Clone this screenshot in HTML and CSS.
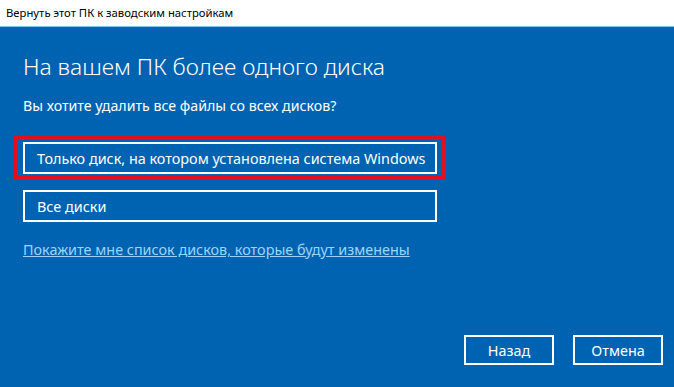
FILE: index.html
```html
<!DOCTYPE html>
<html lang="ru">

<head>
    <meta charset="UTF-8">
    <meta name="viewport" content="width=device-width, initial-scale=1.0">
    <title>Вернуть этот ПК к заводским настройкам</title>
    <link rel="stylesheet" href="styles.css">
</head>

<body>

    <div class="window">
        <!-- Заголовок окна -->
        <div class="titlebar">Вернуть этот ПК к заводским настройкам</div>

        <div class="content">
            <h1>На вашем ПК более одного диска</h1>
            <p class="question">Вы хотите удалить все файлы со всех дисков?</p>

            <!-- Варианты -->
            <div class="options">
                <div class="highlight">
                    <button class="option">Только диск, на котором установлена система Windows</button>
                </div>
                <button class="option">Все диски</button>
            </div>

            <a class="link" href="#">Покажите мне список дисков, которые будут изменены</a>

            <!-- Кнопки внизу -->
            <div class="footer">
                <button class="action">Назад</button>
                <button class="action">Отмена</button>
            </div>
        </div>
    </div>

</body>

</html>
```

FILE: styles.css
```css
body {
    margin: 0;
    padding: 0;
    font-family: "Noto Sans", "Open Sans", sans-serif;
    background-color: #0063b1;
}

.window {
    display: flex;
    flex-direction: column;
    width: 674px;
    height: 387px;
    overflow: hidden;
}

.titlebar {
    height: 26px;
    line-height: 26px;
    padding-left: 6px;
    background-color: #ffffff;
    color: #000000;
    font-size: 11.3px;
    border-bottom: 1px solid #7fc4f0;
}

.content {
    flex: 1;
    display: flex;
    flex-direction: column;
    padding: 0 11px 0 23px;
    color: #ffffff;
}

h1 {
    margin: 25px 0 0 0;
    font-size: 22.8px;
    font-weight: 300;
    line-height: 30px;
}

.question {
    margin: 14px 0 0 0;
    font-size: 14.2px;
    line-height: 20px;
}

.options {
    display: flex;
    flex-direction: column;
    gap: 16px;
    margin-top: 26px;
    width: 414px;
}

.highlight {
    margin: -6px -9px;
    padding: 2px 5px;
    border: 4px solid #e2101f;
}

.option {
    display: block;
    width: 414px;
    height: 32px;
    padding: 0 12px;
    background-color: transparent;
    border: 2px solid #ffffff;
    color: #ffffff;
    font-family: inherit;
    font-size: 14.4px;
    text-align: left;
    white-space: nowrap;
    cursor: pointer;
}

.link {
    margin-top: 18px;
    color: #99d5ff;
    font-size: 14.4px;
    line-height: 20px;
    text-decoration: underline;
    align-self: flex-start;
}

.footer {
    display: flex;
    justify-content: flex-end;
    gap: 19px;
    margin-top: auto;
    margin-bottom: 22px;
}

.action {
    width: 90px;
    height: 30px;
    background-color: transparent;
    border: 2px solid #ffffff;
    color: #ffffff;
    font-family: inherit;
    font-size: 14.4px;
    cursor: pointer;
}
```
